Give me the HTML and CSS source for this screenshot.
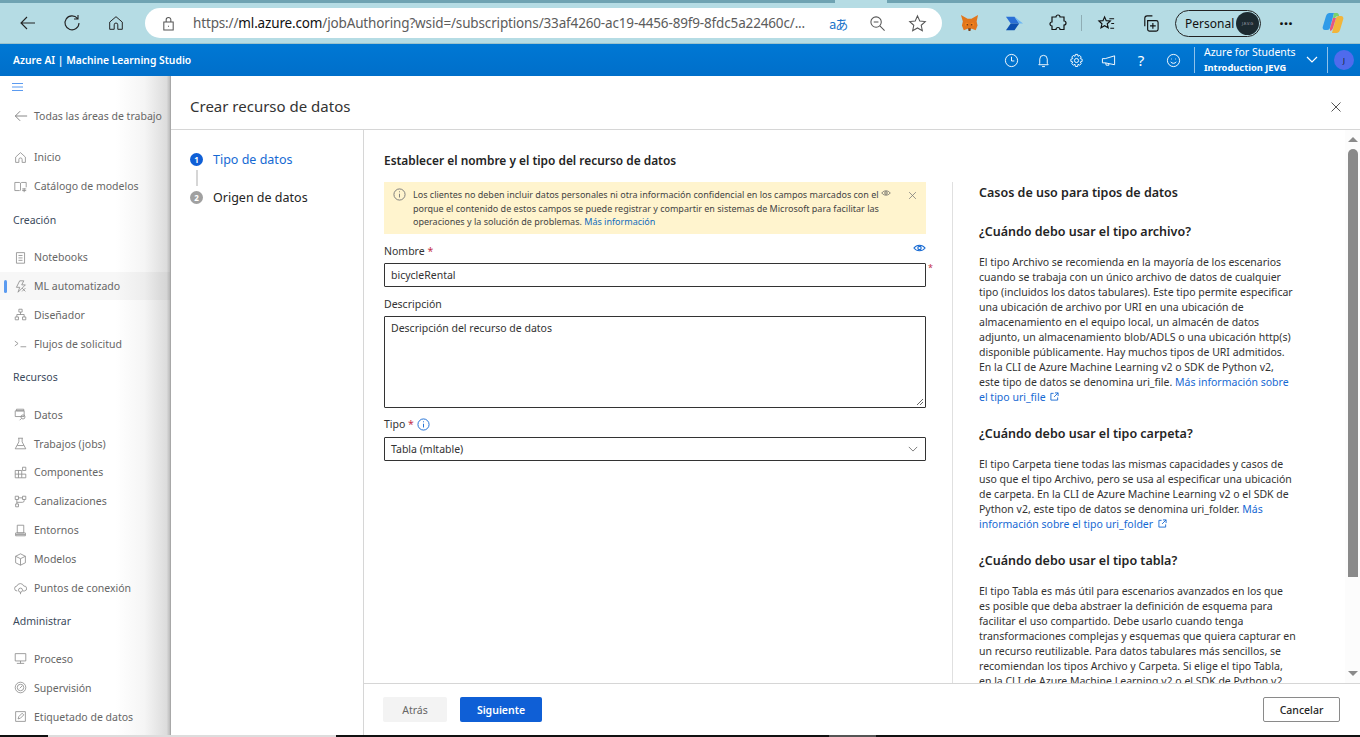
FILE: index.html
```html
<!DOCTYPE html>
<html lang="es">
<head>
  <meta charset="utf-8">
  <title>Crear recurso de datos</title>
  <link rel="stylesheet" href="styles.css">
</head>
<body>
  <!-- browser chrome -->
  <div class="tabstrip"><span class="tab-cut"></span></div>
  <header class="browser">
    <svg class="b-ico back" viewBox="0 0 20 20"><path d="M17 10H3M9 4l-6 6 6 6"/></svg>
    <svg class="b-ico reload" viewBox="0 0 20 20"><path d="M15.5 5.5A7 7 0 1 0 17 10M16 2v4h-4"/></svg>
    <svg class="b-ico home" viewBox="0 0 20 20"><path d="M3 9l7-6 7 6v8h-5v-5a2 2 0 0 0-4 0v5H3z"/></svg>
    <div class="omnibox">
      <svg class="b-ico lock" viewBox="0 0 16 16"><path d="M3 6.500h10V15H3zM5.500 6.500V4a2.500 2.500 0 0 1 5 0v2.500M8 10.500v1"/></svg>
      <span class="url">https://<b>ml.azure.com</b>/jobAuthoring?wsid=/subscriptions/33af4260-ac19-4456-89f9-8fdc5a22460c/...</span>
      <span class="translate">aあ</span>
      <svg class="b-ico zoomout" viewBox="0 0 18 18"><circle cx="7.500" cy="7.500" r="5.500"/><path d="M5 7.500h5M11.500 11.500l5 5"/></svg>
      <svg class="b-ico star" viewBox="0 0 20 20"><path d="M10 2l2.400 5.400 5.800.6-4.300 3.900 1.200 5.700-5.100-2.900-5.100 2.900 1.200-5.700L1.800 8l5.800-.6z"/></svg>
    </div>
    <svg class="ext fox" viewBox="0 0 20 20"><path fill="#e2761b" d="M1 1l7 4h4l7-4-1.500 7 1 4-2 5-4-1.500H8L4 17l-2-5 1-4z"/><path fill="#f6851b" d="M6 9l3 1-1 3-3-1zM14 9l-3 1 1 3 3-1z"/><path fill="#763d16" d="M7 10.500h1.500v1.500H7zM11.500 10.500H13v1.500h-1.500zM8.500 15h3l-.5 3H9z"/></svg>
    <svg class="ext auto" viewBox="0 0 20 20"><path fill="#2a6fd6" d="M1 3h9l5 7H6z"/><path fill="#0c4fb0" d="M6 10h9l-5 7H1z"/><path fill="#6cb6f5" d="M10 3l9 7h-4z"/></svg>
    <svg class="b-ico puzzle" viewBox="0 0 20 20"><path d="M8 4a2 2 0 0 1 4 0h4v4a2 2 0 0 1 0 4v4.500h-4a2 2 0 0 0-4 0H4V13a2 2 0 0 1 0-4V4z"/></svg>
    <span class="b-sep"></span>
    <svg class="b-ico favs" viewBox="0 0 20 20"><path d="M8 3l1.700 4 4.300.4-3.200 2.900 1 4.200L8 12.300l-3.800 2.200 1-4.200L2 7.400 6.300 7zM13 5h5M15 10h3M14 15h4"/></svg>
    <svg class="b-ico colls" viewBox="0 0 20 20"><path d="M4 13V4.500A2.500 2.500 0 0 1 6.500 2H12M7 7h9a2 2 0 0 1 2 2v7a2 2 0 0 1-2 2H9a2 2 0 0 1-2-2zM12.500 9.500v6M9.500 12.500h6"/></svg>
    <div class="profile"><span>Personal</span><span class="pic">J.E.V.G</span></div>
    <span class="dots">···</span>
    <svg class="copilot" viewBox="0 0 24 24">
      <path fill="#2f9be8" d="M8 2h5L9 17a3 3 0 0 1-3 2H4C2 19 1 17 2 15L5 5a4 4 0 0 1 3-3z"/>
      <path fill="#f2b53a" d="M16 22h-5l4-15a3 3 0 0 1 3-2h2c2 0 3 2 2 4l-3 10a4 4 0 0 1-3 3z"/>
      <path fill="#e8577e" d="M9 17l3-10h3l-3 10a4 4 0 0 1-3 3z"/>
      <path fill="#7ad36b" d="M13 2h3c1 0 2 1 2 3h-1a3 3 0 0 0-3 2h-2z"/>
    </svg>
  </header>

  <!-- studio top bar -->
  <div class="topbar">
    <span class="brand">Azure AI | Machine Learning Studio</span>
    <div class="top-icons">
      <svg viewBox="0 0 16 16"><circle cx="8" cy="8" r="6.500"/><path d="M8 4v4.500h3"/></svg>
      <svg viewBox="0 0 16 16"><path d="M4 11V6.500a4 4 0 0 1 8 0V11l1 1.500H3zM6.500 14.500h3"/></svg>
      <svg viewBox="0 0 16 16"><circle cx="8" cy="8" r="2.200"/><path d="M6.800 1.500h2.400l.4 2 1.800-.9 1.600 1.700-1 1.700 2 .6v2.400l-2 .5 1 1.800-1.600 1.700-1.800-1-.4 2.400H6.800l-.4-2.400-1.800 1L3 11.300l1-1.800-2-.5V6.600l2-.6-1-1.700 1.600-1.700 1.800.9z"/></svg>
      <svg viewBox="0 0 16 16"><path d="M14.500 3v9.500l-10-2H1.500V6h3zM5 10.500l.5 2.500h3l-.3-1.600"/></svg>
      <span class="help">?</span>
      <svg viewBox="0 0 16 16"><circle cx="8" cy="8" r="6.500"/><path d="M5 9.500c1.500 2 4.500 2 6 0M5.800 6v.8M10.200 6v.8"/></svg>
    </div>
    <span class="top-sep"></span>
    <div class="tenant"><span>Azure for Students</span><b>Introduction JEVG</b></div>
    <svg class="tenant-chev" viewBox="0 0 12 8"><path d="M1 1l5 5 5-5"/></svg>
    <span class="top-sep sep2"></span>
    <span class="avatar">J</span>
  </div>

  <div class="app">
    <!-- left nav, behind the panel -->
    <nav class="sidenav">
      <svg class="burger" viewBox="0 0 11 8"><path d="M0 .5h11M0 4h11M0 7.500h11"/></svg>
      <a class="nav-item back-all"><svg viewBox="0 0 16 16"><path d="M15 8H1.500M7 2.500L1.500 8 7 13.500"/></svg>Todas las áreas de trabajo</a>
      <a class="nav-item first"><svg viewBox="0 0 16 16"><path d="M2 7.500L8 2l6 5.500V14h-4v-3.500a2 2 0 0 0-4 0V14H2z"/></svg>Inicio</a>
      <a class="nav-item"><svg viewBox="0 0 16 16"><path d="M1 3h5.500L8 4l1.500-1H15v6M8 4v9M1 3v10h6"/><path d="M10 11h5M10 13h5M12.500 10v5"/></svg>Catálogo de modelos</a>
      <h4>Creación</h4>
      <a class="nav-item"><svg viewBox="0 0 16 16"><path d="M3 2h10v13H3zM5.500 5.500h5M5.500 8.500h5M5.500 11.500h5"/></svg>Notebooks</a>
      <a class="nav-item active"><svg viewBox="0 0 16 16"><path d="M7 1h5L9.500 6H14l-9 9 2-6H3zM10 10l4 4M14 10l-4 4"/></svg>ML automatizado</a>
      <a class="nav-item"><svg viewBox="0 0 16 16"><path d="M6 1.500h4v3.500H6zM1.500 11h4v3.500h-4zM10.500 11h4v3.500h-4zM8 5v3M3.500 11V8h9v3"/></svg>Diseñador</a>
      <a class="nav-item"><svg viewBox="0 0 16 16"><path d="M1 5l4 3-4 3M8 12h7"/></svg>Flujos de solicitud</a>
      <h4>Recursos</h4>
      <a class="nav-item"><svg viewBox="0 0 16 16"><path d="M3 1.500h9v2H3zM1.500 3.500h11v7h-11zM11 8.500a2.500 2.500 0 1 0 .1 5 2.500 2.500 0 0 0-.1-5zM9 13l-2 2"/></svg>Datos</a>
      <a class="nav-item"><svg viewBox="0 0 16 16"><path d="M5 1.500h6M6 1.500V6l-4.500 8.500h13L10 6V1.500M4 10.500h8"/></svg>Trabajos (jobs)</a>
      <a class="nav-item"><svg viewBox="0 0 16 16"><path d="M1.500 5.500h8v9h-8zM1.500 10h8M5.500 5.500v9M9.500 10h5v4.500h-5M10.500 1.500h4v4h-4z"/></svg>Componentes</a>
      <a class="nav-item"><svg viewBox="0 0 16 16"><path d="M1.500 1.500h4v4h-4zM10.500 1.500h4v4h-4zM2 11h3.500v3.500H2zM5.500 3.500h5M3.500 5.500V11M12.500 5.500v1.500a2 2 0 0 1-2 2h-7"/></svg>Canalizaciones</a>
      <a class="nav-item"><svg viewBox="0 0 16 16"><path d="M4 1.500h8V11H4zM2 11h12v3.500H2zM2 13h12"/></svg>Entornos</a>
      <a class="nav-item"><svg viewBox="0 0 16 16"><path d="M8 1l6 3v8l-6 3-6-3V4zM2 4l6 3 6-3M8 7v8"/></svg>Modelos</a>
      <a class="nav-item"><svg viewBox="0 0 16 16"><path d="M4 11a3 3 0 0 1-.5-6A4.500 4.500 0 0 1 12 5a3 3 0 0 1 1 6H11"/><circle cx="8" cy="10" r="2.500"/><path d="M8 12.500V15"/></svg>Puntos de conexión</a>
      <h4>Administrar</h4>
      <a class="nav-item"><svg viewBox="0 0 16 16"><path d="M1.500 2h13v9h-13zM8 11v3M3.500 14h9"/></svg>Proceso</a>
      <a class="nav-item"><svg viewBox="0 0 16 16"><circle cx="8" cy="8" r="6.500"/><circle cx="8" cy="8" r="4"/><path d="M7 9l3-3"/></svg>Supervisión</a>
      <a class="nav-item"><svg viewBox="0 0 16 16"><path d="M2 2h12v12H2zM5 11l1-3 4-4 2 2-4 4z"/></svg>Etiquetado de datos</a>
    </nav>

    <!-- wizard panel -->
    <section class="panel">
      <div class="panel-head">
        <h1>Crear recurso de datos</h1>
        <svg class="close" viewBox="0 0 12 12"><path d="M1.500 1.500l9 9M10.500 1.500l-9 9"/></svg>
      </div>
      <div class="panel-body">
        <ol class="steps">
          <li class="step current"><i>1</i>Tipo de datos</li>
          <li class="step-line"></li>
          <li class="step"><i>2</i>Origen de datos</li>
        </ol>
        <div class="panel-main">
          <div class="scroller">
            <div class="form-col">
              <h2>Establecer el nombre y el tipo del recurso de datos</h2>
              <div class="notice">
                <svg class="notice-ico" viewBox="0 0 14 14"><circle cx="7" cy="7" r="6"/><path d="M7 6.200v4M7 3.600v1"/></svg>
                <p>Los clientes no deben incluir datos personales ni otra información confidencial en los campos marcados con el <svg class="eye-sm" viewBox="0 0 14 8"><path d="M1 4c3-4 9-4 12 0-3 4-9 4-12 0z"/><circle cx="7" cy="4" r="1.800"/></svg><br>porque el contenido de estos campos se puede registrar y compartir en sistemas de Microsoft para facilitar las<br>operaciones y la solución de problemas. <a>Más información</a></p>
                <svg class="notice-x" viewBox="0 0 12 12"><path d="M1.500 1.500l9 9M10.500 1.500l-9 9"/></svg>
              </div>
              <div class="label-row name-row">
                <label>Nombre <em>*</em></label>
                <svg class="eye" viewBox="0 0 14 8"><path d="M1 4c3-4 9-4 12 0-3 4-9 4-12 0z"/><circle cx="7" cy="4" r="1.800"/></svg>
              </div>
              <div class="input-wrap">
                <div class="field">bicycleRental</div>
                <em>*</em>
              </div>
              <label class="desc-label">Descripción</label>
              <div class="field area">Descripción del recurso de datos
                <svg class="grip" viewBox="0 0 8 8"><path d="M1 7l6-6M4 7l3-3"/></svg>
              </div>
              <div class="label-row type-row">
                <label>Tipo <em>*</em></label>
                <svg class="info" viewBox="0 0 14 14"><circle cx="7" cy="7" r="6"/><path d="M7 6.200v4M7 3.600v1"/></svg>
              </div>
              <div class="field select">Tabla (mltable)
                <svg viewBox="0 0 12 7"><path d="M1 1l5 5 5-5"/></svg>
              </div>
            </div>
            <aside class="help-col">
              <h3 class="help-title">Casos de uso para tipos de datos</h3>
              <h3>¿Cuándo debo usar el tipo archivo?</h3>
              <p>El tipo Archivo se recomienda en la mayoría de los escenarios<br>cuando se trabaja con un único archivo de datos de cualquier<br>tipo (incluidos los datos tabulares). Este tipo permite especificar<br>una ubicación de archivo por URI en una ubicación de<br>almacenamiento en el equipo local, un almacén de datos<br>adjunto, un almacenamiento blob/ADLS o una ubicación http(s)<br>disponible públicamente. Hay muchos tipos de URI admitidos.<br>En la CLI de Azure Machine Learning v2 o SDK de Python v2,<br>este tipo de datos se denomina uri_file. <a>Más información sobre<br>el tipo uri_file <svg class="ext-link" viewBox="0 0 10 10"><path d="M4 1.500H1v7.500h7.500V6M5.500 1h3.500v3.500M9 1L4.500 5.500"/></svg></a></p>
              <h3>¿Cuándo debo usar el tipo carpeta?</h3>
              <p>El tipo Carpeta tiene todas las mismas capacidades y casos de<br>uso que el tipo Archivo, pero se usa al especificar una ubicación<br>de carpeta. En la CLI de Azure Machine Learning v2 o el SDK de<br>Python v2, este tipo de datos se denomina uri_folder. <a>Más<br>información sobre el tipo uri_folder <svg class="ext-link" viewBox="0 0 10 10"><path d="M4 1.500H1v7.500h7.500V6M5.500 1h3.500v3.500M9 1L4.500 5.500"/></svg></a></p>
              <h3>¿Cuándo debo usar el tipo tabla?</h3>
              <p>El tipo Tabla es más útil para escenarios avanzados en los que<br>es posible que deba abstraer la definición de esquema para<br>facilitar el uso compartido. Debe usarlo cuando tenga<br>transformaciones complejas y esquemas que quiera capturar en<br>un recurso reutilizable. Para datos tabulares más sencillos, se<br>recomiendan los tipos Archivo y Carpeta. Si elige el tipo Tabla,<br>en la CLI de Azure Machine Learning v2 o el SDK de Python v2,</p>
            </aside>
            <div class="scrollbar">
              <span class="arrow up"></span>
              <span class="thumb"></span>
              <span class="arrow down"></span>
            </div>
          </div>
          <footer class="panel-foot">
            <button class="btn ghost">Atrás</button>
            <button class="btn primary">Siguiente</button>
            <button class="btn outline">Cancelar</button>
          </footer>
        </div>
      </div>
    </section>
  </div>
  <div class="taskbar"><span class="task-win"></span><span class="task-btn"></span></div>
</body>
</html>
```

FILE: styles.css
```css
* {
  box-sizing: border-box;
}

html, body {
  margin: 0;
  height: 737px;
  overflow: hidden;
}

body {
  font-family: "Noto Sans", "Open Sans", sans-serif;
  font-size: 11px;
  color: #242424;
  background: #fff;
  display: flex;
  flex-direction: column;
}

svg {
  fill: none;
  stroke: currentColor;
  stroke-width: 1;
  flex: none;
}

h1, h2, h3, h4, p, ol {
  margin: 0;
  padding: 0;
}

a {
  color: #1669d3;
}

/* browser chrome */
.tabstrip {
  height: 3px;
  background: #6fa3b2;
  display: flex;
  justify-content: flex-end;
  padding-right: 473px;
}

.tab-cut {
  width: 52px;
  background: #b5dce4;
}

.browser {
  height: 41px;
  background: #b5dce4;
  border-bottom: 1px solid #9cc3cc;
  display: flex;
  align-items: center;
  color: #222;
}

.b-ico {
  stroke-width: 1.100;
}

.back { width: 20px; height: 20px; margin-left: 18px; }
.reload { width: 20px; height: 20px; margin-left: 24px; }
.home { width: 18px; height: 18px; margin-left: 25px; }

.omnibox {
  width: 797px;
  height: 30px;
  margin-left: 20px;
  background: #fff;
  border-radius: 15px;
  display: flex;
  align-items: center;
  color: #555;
}

.lock { width: 15px; height: 15px; margin-left: 16px; }

.url {
  margin-left: 17px;
  width: 636px;
  font-size: 13.500px;
  white-space: nowrap;
  letter-spacing: -0.15px;
  color: #5c5c5c;
}

.url b {
  font-weight: 400;
  color: #111;
}

.translate {
  width: 19px;
  font-size: 13px;
  color: #1a73c9;
  white-space: nowrap;
  letter-spacing: -1px;
  font-family: "Noto Sans CJK JP", "Noto Sans", sans-serif;
}

.zoomout { width: 17px; height: 17px; margin-left: 21px; }
.star { width: 19px; height: 19px; margin-left: 22px; }

.ext { width: 19px; height: 19px; stroke: none; }
.fox { margin-left: 18px; }
.auto { margin-left: 26px; }
.puzzle { width: 20px; height: 20px; margin-left: 24px; color: #111; stroke-width: 1.200; }

.b-sep {
  width: 1px;
  height: 16px;
  background: #8fadb4;
  margin-left: 13px;
}

.favs { width: 19px; height: 19px; margin-left: 15px; color: #111; stroke-width: 1.200; }
.colls { width: 19px; height: 19px; margin-left: 25px; color: #111; stroke-width: 1.200; }

.profile {
  width: 86px;
  height: 27px;
  margin-left: 15px;
  border: 1px solid #222;
  border-radius: 14px;
  display: flex;
  align-items: center;
  justify-content: space-between;
  padding-left: 9px;
  font-size: 12px;
  color: #111;
}

.pic {
  width: 23px;
  height: 23px;
  border-radius: 50%;
  background: #1c2a30;
  color: #aab;
  font-size: 4px;
  display: flex;
  align-items: center;
  justify-content: center;
  margin-right: 1px;
}

.dots {
  margin-left: 15px;
  width: 20px;
  font-size: 16px;
  font-weight: 700;
  color: #111;
  text-align: center;
}

.copilot {
  width: 24px;
  height: 24px;
  margin-left: 25px;
  stroke: none;
}

/* studio top bar */
.topbar {
  height: 32px;
  background: linear-gradient(#0078d4, #006fca);
  color: #fff;
  display: flex;
  align-items: center;
}

.brand {
  margin-left: 13px;
  font-size: 10.300px;
  font-weight: 600;
  width: 991px;
}

.top-icons {
  display: flex;
  align-items: center;
  gap: 17.400px;
}

.top-icons svg {
  width: 15px;
  height: 15px;
}

.help {
  width: 15px;
  font-size: 15px;
  text-align: center;
  line-height: 15px;
}

.top-sep {
  width: 1px;
  height: 26px;
  background: #8fc1ea;
  margin-left: 13px;
}

.tenant {
  margin-left: 9px;
  width: 100px;
  display: flex;
  flex-direction: column;
  font-size: 10.500px;
  line-height: 16px;
}

.tenant b {
  font-size: 9.300px;
  font-weight: 700;
}

.tenant-chev {
  width: 12px;
  height: 8px;
  margin-left: 2px;
  stroke-width: 1.200;
}

.sep2 {
  margin-left: 9px;
}

.avatar {
  width: 20px;
  height: 20px;
  margin-left: 6px;
  border-radius: 50%;
  background: #4f6bed;
  color: #111;
  font-size: 7px;
  display: flex;
  align-items: center;
  justify-content: center;
}

/* page under the bars */
.app {
  flex: 1;
  min-height: 0;
  display: flex;
}

.sidenav {
  width: 170px;
  flex: none;
  display: flex;
  flex-direction: column;
  background: linear-gradient(90deg, #fff 68%, #f5f5f5 85%, #dcdcdc 98%, #bbb);
  color: #666;
  font-size: 10.500px;
  overflow: hidden;
}

.burger {
  width: 11px;
  height: 8px;
  margin: 7px 0 0 12px;
  color: #5b9bf0;
}

.nav-item {
  height: 28.900px;
  flex: none;
  display: flex;
  align-items: center;
  gap: 7px;
  padding-left: 14px;
  color: #666;
  white-space: nowrap;
}

.nav-item svg {
  width: 13px;
  height: 13px;
  color: #8a8a8a;
}

.back-all {
  margin-top: 11px;
  gap: 6px;
}

.back-all svg {
  width: 14px;
  height: 14px;
  color: #777;
}

.first {
  margin-top: 12px;
}

.active {
  background: rgba(0, 0, 0, 0.03);
  position: relative;
}

.active::before {
  content: "";
  position: absolute;
  left: 4px;
  top: 8px;
  width: 3px;
  height: 13px;
  border-radius: 2px;
  background: #5b9bf0;
}

.sidenav h4 {
  height: 42px;
  flex: none;
  padding: 9px 0 0 13px;
  font-size: 10.500px;
  font-weight: 400;
  line-height: 21px;
  color: #3b4a5c;
}

/* panel */
.panel {
  flex: 1;
  min-width: 0;
  display: flex;
  flex-direction: column;
  background: #fff;
  border-left: 1px solid #a8a8a8;
}

.panel-head {
  height: 54px;
  flex: none;
  display: flex;
  align-items: center;
  justify-content: space-between;
  padding: 6px 18px 0 19px;
  border-bottom: 1px solid #d6d6d6;
}

.panel-head h1 {
  font-size: 15px;
  font-weight: 400;
  color: #333;
}

.close {
  width: 12px;
  height: 12px;
  color: #555;
  margin-top: 2px;
}

.panel-body {
  flex: 1;
  min-height: 0;
  display: flex;
}

.steps {
  width: 193px;
  flex: none;
  list-style: none;
  padding: 21px 0 0 19px;
  border-right: 1px solid #d6d6d6;
}

.step {
  height: 16px;
  display: flex;
  align-items: center;
  gap: 10px;
  font-size: 12.500px;
  color: #242424;
}

.step i {
  width: 13px;
  height: 13px;
  border-radius: 50%;
  background: #a0a0a0;
  color: #fff;
  font-size: 8px;
  font-style: normal;
  font-weight: 700;
  display: flex;
  align-items: center;
  justify-content: center;
}

.current {
  color: #1669d3;
}

.current i {
  background: #0f5fd6;
}

.step-line {
  width: 2px;
  height: 16px;
  margin: 3px 0 3px 6px;
  background: #d6d6d6;
}

.panel-main {
  flex: 1;
  min-width: 0;
  display: flex;
  flex-direction: column;
}

.scroller {
  flex: 1;
  min-height: 0;
  display: flex;
  overflow: hidden;
}

.form-col {
  width: 588px;
  flex: none;
  padding: 21px 0 0 20px;
}

.form-col h2 {
  font-size: 11.900px;
  font-weight: 600;
  line-height: 18px;
  color: #242424;
}

.notice {
  width: 542px;
  height: 52px;
  margin-top: 13px;
  background: #fff4ce;
  display: flex;
  padding: 6px 9px 0 9px;
  font-size: 9px;
  line-height: 13.500px;
  color: #444;
}

.notice p {
  flex: 1;
  margin-left: 7px;
  white-space: nowrap;
}

.notice a {
  color: #0f6cbd;
}

.notice-ico {
  width: 13px;
  height: 13px;
  color: #777;
}

.eye-sm {
  width: 10px;
  height: 6px;
  color: #555;
  vertical-align: 2px;
}

.notice-x {
  width: 9px;
  height: 9px;
  margin-top: 3px;
  color: #777;
}

.label-row {
  display: flex;
  align-items: flex-start;
  font-size: 10.500px;
  line-height: 15px;
  color: #333;
}

.name-row {
  width: 542px;
  margin-top: 10px;
  justify-content: space-between;
  height: 19px;
}

.eye {
  width: 13px;
  height: 8px;
  color: #1669d3;
  stroke-width: 1.200;
}

em {
  font-style: normal;
  color: #c4314b;
}

.input-wrap {
  display: flex;
  align-items: flex-start;
  width: 560px;
}

.input-wrap em {
  font-size: 9px;
  line-height: 10px;
  margin-left: 2px;
}

.field {
  width: 542px;
  height: 24px;
  border: 1px solid #333;
  border-radius: 1px;
  padding: 0 6px;
  display: flex;
  align-items: center;
  font-size: 10.500px;
  color: #333;
}

.desc-label {
  display: block;
  margin-top: 9px;
  height: 20px;
  font-size: 10.500px;
  line-height: 16px;
  color: #333;
}

.area {
  height: 92px;
  align-items: flex-start;
  padding-top: 4px;
  justify-content: space-between;
  position: relative;
}

.grip {
  position: absolute;
  right: 1px;
  bottom: 1px;
  width: 8px;
  height: 8px;
  color: #666;
}

.type-row {
  margin-top: 9px;
  height: 20px;
  gap: 3px;
}

.info {
  width: 13px;
  height: 13px;
  margin-top: 1px;
  color: #1669d3;
}

.select {
  justify-content: space-between;
}

.select svg {
  width: 10px;
  height: 6px;
  margin-right: 1px;
  color: #666;
}

.help-col {
  width: 393px;
  flex: none;
  margin-top: 52px;
  padding-left: 26px;
  border-left: 1px solid #e0e0e0;
  font-size: 10.500px;
  line-height: 15px;
  color: #333;
  white-space: nowrap;
}

.help-col h3 {
  font-size: 12.500px;
  font-weight: 600;
  line-height: 18px;
  color: #242424;
}

.help-title {
  margin-top: 2px;
  margin-bottom: 21px;
}

.help-col p {
  margin: 14px 0 20px;
}

.ext-link {
  width: 9px;
  height: 9px;
  margin-left: 2px;
}

.scrollbar {
  width: 15px;
  flex: none;
  background: #fcfcfc;
  display: flex;
  flex-direction: column;
  align-items: center;
}

.thumb {
  flex: none;
  width: 10px;
  height: 428px;
  margin-top: 7px;
  border-radius: 5px 5px 0 0;
  background: #8a8a8a;
}

.arrow {
  width: 0;
  height: 0;
  border-left: 5px solid transparent;
  border-right: 5px solid transparent;
}

.up {
  margin-top: 7px;
  border-bottom: 5px solid #8a8a8a;
}

.down {
  margin-top: auto;
  margin-bottom: 7px;
  border-top: 5px solid #8a8a8a;
}

.panel-foot {
  height: 52px;
  flex: none;
  border-top: 1px solid #d6d6d6;
  display: flex;
  align-items: flex-start;
  gap: 13px;
  padding: 13px 20px 0 19px;
}

.btn {
  height: 25px;
  border: 0;
  border-radius: 2px;
  font-family: inherit;
  font-size: 10.500px;
  padding: 0;
}

.ghost {
  width: 64px;
  background: #f3f3f3;
  color: #666;
}

.primary {
  width: 82px;
  background: #0f5fd6;
  color: #fff;
  font-weight: 600;
}

.outline {
  width: 77px;
  margin-left: auto;
  background: #fff;
  border: 1px solid #8a8a8a;
  color: #242424;
  font-weight: 500;
}

/* bit of the OS taskbar left in the shot */
.taskbar {
  height: 2px;
  flex: none;
  background: #111;
  display: flex;
  padding-left: 48px;
}

.task-win {
  width: 288px;
  background: #ddd;
}

.task-btn {
  width: 47px;
  margin-left: 493px;
  background: #555;
}
```
